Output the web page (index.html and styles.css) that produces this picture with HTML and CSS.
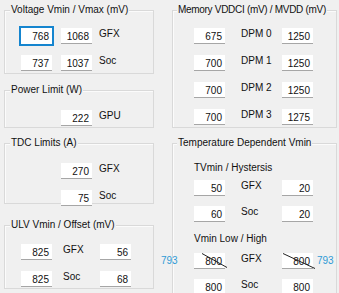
FILE: index.html
```html
<!DOCTYPE html>
<html lang="en">
<head>
    <meta charset="UTF-8">
    <title>Voltage settings</title>
    <link rel="stylesheet" href="styles.css">
</head>
<body>
    <div class="window">
        <div class="col col-left">
            <div class="group g-voltage">
                <span class="group-title">Voltage Vmin / Vmax (mV)</span>
                <div class="row r-first">
                    <span class="box focused">768</span>
                    <span class="box gap">1068</span>
                    <span class="lbl">GFX</span>
                </div>
                <div class="row">
                    <span class="box">737</span>
                    <span class="box gap">1037</span>
                    <span class="lbl">Soc</span>
                </div>
            </div>

            <div class="group g-power">
                <span class="group-title">Power Limit (W)</span>
                <div class="row r-first">
                    <span class="box solo">222</span>
                    <span class="lbl">GPU</span>
                </div>
            </div>

            <div class="group g-tdc">
                <span class="group-title">TDC Limits (A)</span>
                <div class="row r-first">
                    <span class="box solo">270</span>
                    <span class="lbl">GFX</span>
                </div>
                <div class="row">
                    <span class="box solo">75</span>
                    <span class="lbl">Soc</span>
                </div>
            </div>

            <div class="group g-ulv">
                <span class="group-title">ULV Vmin / Offset (mV)</span>
                <div class="row r-first">
                    <span class="box">825</span>
                    <span class="lbl mid">GFX</span>
                    <span class="box">56</span>
                </div>
                <div class="row">
                    <span class="box">825</span>
                    <span class="lbl mid">Soc</span>
                    <span class="box">68</span>
                </div>
            </div>
        </div>

        <div class="col col-right">
            <div class="group g-memory">
                <span class="group-title">Memory VDDCI (mV) / MVDD (mV)</span>
                <div class="row r-first">
                    <span class="box">675</span>
                    <span class="lbl dpm">DPM 0</span>
                    <span class="box">1250</span>
                </div>
                <div class="row">
                    <span class="box">700</span>
                    <span class="lbl dpm">DPM 1</span>
                    <span class="box">1250</span>
                </div>
                <div class="row">
                    <span class="box">700</span>
                    <span class="lbl dpm">DPM 2</span>
                    <span class="box">1250</span>
                </div>
                <div class="row">
                    <span class="box">700</span>
                    <span class="lbl dpm">DPM 3</span>
                    <span class="box">1275</span>
                </div>
            </div>

            <div class="group g-temp">
                <span class="group-title">Temperature Dependent Vmin</span>
                <div class="sub-title t-hyst">TVmin / Hystersis</div>
                <div class="row r-after-sub">
                    <span class="box">50</span>
                    <span class="lbl dpm">GFX</span>
                    <span class="box">20</span>
                </div>
                <div class="row r-tight">
                    <span class="box">60</span>
                    <span class="lbl dpm">Soc</span>
                    <span class="box">20</span>
                </div>
                <div class="sub-title t-vmin">Vmin Low / High</div>
                <div class="row r-after-sub2">
                    <span class="hint hint-left">793</span>
                    <span class="box struck">800
                        <svg class="strike s-left" width="36" height="18" viewBox="0 0 36 18"><line x1="8" y1="0.5" x2="33" y2="14.5" stroke="#222" stroke-width="1"/></svg>
                    </span>
                    <span class="lbl dpm">GFX</span>
                    <span class="box struck">800
                        <svg class="strike s-right" width="36" height="18" viewBox="0 0 36 18"><line x1="1" y1="0.5" x2="33" y2="15.5" stroke="#222" stroke-width="1"/></svg>
                    </span>
                    <span class="hint hint-right">793</span>
                </div>
                <div class="row r-tight">
                    <span class="box">800</span>
                    <span class="lbl dpm">Soc</span>
                    <span class="box">800</span>
                </div>
            </div>
        </div>
    </div>
</body>
</html>
```

FILE: styles.css
```css
/* Janela no estilo de formulário do Windows */
body {
    margin: 0;
    background-color: #f0f0f0;
    font-family: 'Liberation Sans', Arial, sans-serif;
    font-size: 10px;
    color: #111;
    overflow: hidden;
}

.window {
    display: flex;
    padding-left: 4px;
    gap: 18px;
}

.col {
    display: flex;
    flex-direction: column;
}

.col-left {
    width: 150px;
}

.col-right {
    width: 165px;
}

/* Caixa de grupo */
.group {
    box-sizing: border-box;
    border: 1px solid #d9d9d9;
    box-shadow: inset 1px 1px 0 #fbfbfb;
    padding-left: 16px;
}

.group-title {
    display: inline-block;
    margin-top: -7px;
    margin-left: -11px;
    padding: 0 1px;
    line-height: 12px;
    height: 12px;
    white-space: nowrap;
    background-color: #f0f0f0;
    vertical-align: top;
}

.g-voltage { margin-top: 10px; height: 64px; }
.g-power   { margin-top: 16px; height: 38px; }
.g-tdc     { margin-top: 15px; height: 61px; }
.g-ulv     { margin-top: 21px; height: 64px; }

.g-memory { margin-top: 10px; height: 118px; padding-left: 21px; }
.g-temp   { margin-top: 15px; height: 151px; padding-left: 21px; }

.g-memory .group-title,
.g-temp .group-title {
    margin-left: -17px;
}

.g-memory .group-title {
    letter-spacing: -0.3px;
}

.row {
    position: relative;
    display: flex;
    align-items: flex-start;
    height: 16px;
    margin-top: 11px;
}

.r-first { margin-top: 6px; }
.g-power .r-first,
.g-tdc .r-first { margin-top: 8px; }
.g-ulv .r-first { margin-top: 7px; }

.r-tight { margin-top: 10px; }
.r-after-sub { margin-top: 6px; }
.r-after-sub2 { margin-top: 8px; }

.sub-title {
    line-height: 12px;
    height: 12px;
}

.t-hyst { margin-top: 7px; }
.t-vmin { margin-top: 11px; }

/* Caixas de texto */
.box {
    position: relative;
    box-sizing: border-box;
    width: 31px;
    height: 16px;
    line-height: 17px;
    padding-right: 3px;
    text-align: right;
    background-color: #fff;
    border-bottom: 1px solid #a6a6a6;
}

.box.gap { margin-left: 9px; }
.box.solo { margin-left: 40px; }

.box.focused {
    outline: 2px solid #1585cf;
    border-bottom-color: #fff;
}

.lbl {
    margin-left: 7px;
    line-height: 12px;
}

.lbl.mid {
    margin-left: 11px;
    width: 37px;
}

.lbl.dpm {
    margin-left: 16px;
    width: 41px;
}

/* Valores riscados e dicas azuis */
.strike {
    position: absolute;
    left: 0;
    top: 0;
}

.hint {
    position: absolute;
    top: 2px;
    color: #2f9bd6;
    line-height: 12px;
}

.hint-left { left: -33px; }
.hint-right { left: 123px; }
```
